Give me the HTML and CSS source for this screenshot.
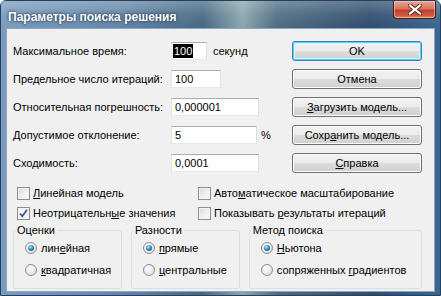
FILE: index.html
```html
<!DOCTYPE html>
<html lang="ru">
<head>
<meta charset="UTF-8" />
<title>Параметры поиска решения</title>
<link rel="stylesheet" href="styles.css">
</head>
<body>

<div class="window">
  <div class="titlebar">
    <span class="title">Параметры поиска решения</span>
    <div class="close">
      <svg width="14" height="11" viewBox="0 0 14 11">
        <path d="M2 1.5 L12 9.5 M12 1.5 L2 9.5" stroke="#5a2418" stroke-width="4" stroke-linecap="square"/>
        <path d="M2 1.5 L12 9.5 M12 1.5 L2 9.5" stroke="#fff" stroke-width="2.2" stroke-linecap="square"/>
      </svg>
    </div>
  </div>

  <div class="client">
    <div class="top">
      <div class="fields">
        <div class="label">Максимальное время:</div>
        <div class="cell"><div class="edit w-time"><span class="selected">100</span></div><span class="unit">секунд</span></div>

        <div class="label">Предельное число итераций:</div>
        <div class="cell"><div class="edit w-iter">100</div></div>

        <div class="label">Относительная погрешность:</div>
        <div class="cell"><div class="edit w-wide">0,000001</div></div>

        <div class="label">Допустимое отклонение:</div>
        <div class="cell"><div class="edit w-tol">5</div><span class="pct">%</span></div>

        <div class="label">Сходимость:</div>
        <div class="cell"><div class="edit w-wide">0,0001</div></div>
      </div>

      <div class="buttons">
        <div class="btn default"><span>OK</span></div>
        <div class="btn"><span>Отмена</span></div>
        <div class="btn"><span><u>З</u>агрузить модель...</span></div>
        <div class="btn"><span>Сохр<u>а</u>нить модель...</span></div>
        <div class="btn"><span><u>С</u>правка</span></div>
      </div>
    </div>

    <div class="checks">
      <div class="check"><span class="box"></span><span><u>Л</u>инейная модель</span></div>
      <div class="check"><span class="box"></span><span>Авто<u>м</u>атическое масштабирование</span></div>
      <div class="check"><span class="box checked">
        <svg width="11" height="11" viewBox="0 0 11 11"><path d="M2 5.5 L4.3 8.3 L9 1.8" fill="none" stroke="#3d5a96" stroke-width="1.8"/></svg>
      </span><span>Неотрицательн<u>ы</u>е значения</span></div>
      <div class="check"><span class="box"></span><span>Показывать <u>р</u>езультаты итераций</span></div>
    </div>

    <div class="groups">
      <fieldset class="group g-est">
        <legend>Оценки</legend>
        <div class="radio"><span class="dot on"></span><span>лин<u>е</u>йная</span></div>
        <div class="radio"><span class="dot"></span><span><u>к</u>вадратичная</span></div>
      </fieldset>
      <fieldset class="group g-diff">
        <legend>Разности</legend>
        <div class="radio"><span class="dot on"></span><span><u>п</u>рямые</span></div>
        <div class="radio"><span class="dot"></span><span><u>ц</u>ентральные</span></div>
      </fieldset>
      <fieldset class="group g-method">
        <legend>Метод поиска</legend>
        <div class="radio"><span class="dot on"></span><span><u>Н</u>ьютона</span></div>
        <div class="radio"><span class="dot"></span><span>сопряженных <u>г</u>радиентов</span></div>
      </fieldset>
    </div>
  </div>
</div>

</body>
</html>
```

FILE: styles.css
```css
* {
box-sizing: border-box;
}

body {
margin: 0;
background: #fff;
font-family: "Liberation Sans", Arial, sans-serif;
font-size: 11px;
color: #000;
overflow: hidden;
}

.window {
width: 441px;
height: 296px;
border: 1px solid #23405e;
border-radius: 6px 6px 0 0;
background: linear-gradient(90deg, #7a9dbf 0%, #6386a8 28%, #466882 46%, #8aa6ae 55%, #4d6c82 63%, #2e4d6d 84%, #3b6690 100%);
padding: 0 5px 3px 5px;
display: flex;
flex-direction: column;
}

.titlebar {
height: 27px;
display: flex;
align-items: flex-start;
justify-content: space-between;
background: linear-gradient(180deg, rgba(255,255,255,0.25) 0%, rgba(255,255,255,0.08) 50%, rgba(0,0,0,0) 100%);
margin: 0 -5px;
padding: 0 4px 0 7px;
}

.title {
margin-top: 9px;
font-family: "Liberation Sans", Arial, sans-serif;
font-weight: bold;
font-size: 12px;
color: #fff;
text-shadow: 0 0 2px #1c3550, 0 0 4px rgba(20,40,60,0.6);
}

.close {
width: 43px;
height: 18px;
border: 1px solid #4e1e16;
border-top: none;
border-radius: 0 0 4px 4px;
background: linear-gradient(180deg, #e7a596 0%, #d6765f 45%, #c2402a 55%, #cc5a40 85%, #e28a6c 100%);
box-shadow: inset 0 0 0 1px rgba(255,220,200,0.5);
display: flex;
align-items: center;
justify-content: center;
}

.client {
flex: 1;
background: #f0f0f0;
border: 1px solid #8ea6bf;
padding: 8px 12px 0 6px;
}

.top {
display: flex;
justify-content: space-between;
}

.fields {
display: grid;
grid-template-columns: 158px 121px;
grid-auto-rows: 28px;
}

.label {
display: flex;
align-items: center;
}

.cell {
display: flex;
align-items: center;
}

.edit {
height: 18px;
background: #fff;
border: 1px solid #abadb3;
border-color: #abadb3 #dbdfe6 #e3e9ef #e2e3ea;
padding-left: 3px;
display: flex;
align-items: center;
}

.w-time { width: 36px; padding-left: 1px; }
.w-iter { width: 50px; }
.w-wide { width: 88px; }
.w-tol { width: 86px; }

.selected {
background: #000;
color: #fff;
padding: 0 1px;
line-height: 14px;
}

.unit {
margin-left: 6px;
}

.pct {
margin-left: 4px;
}

.buttons {
display: flex;
flex-direction: column;
width: 130px;
}

.btn {
height: 20px;
margin: 4px 0;
border: 1px solid #707070;
border-radius: 3px;
background: linear-gradient(180deg, #f2f2f2 0%, #ebebeb 50%, #dddddd 51%, #cfcfcf 100%);
box-shadow: inset 0 0 0 1px #fcfcfc;
display: flex;
align-items: center;
justify-content: center;
}

.btn.default {
border-color: #3c7fb1;
box-shadow: inset 0 0 0 1px #48d6ff, inset 0 0 0 2px #e0f4fc;
}

.checks {
display: grid;
grid-template-columns: 181px auto;
grid-auto-rows: 20px;
margin-top: 6px;
padding-left: 4px;
}

.check {
display: flex;
align-items: center;
}

.box {
width: 13px;
height: 13px;
margin-right: 3px;
border: 1px solid #8f8f8f;
background: linear-gradient(135deg, #d8d8d8 0%, #f2f2f2 60%, #fbfbfb 100%);
box-shadow: inset 0 0 0 1px #f4f4f4;
display: flex;
align-items: center;
justify-content: center;
}

.box.checked {
background: #f4f4f4;
}

.groups {
display: flex;
gap: 9px;
margin-top: 1px;
}

.group {
margin: 0;
padding: 0 0 7px 0;
border: 1px solid #d5dfe5;
border-radius: 3px;
}

.group legend {
margin-left: 1px;
padding: 0 2px;
line-height: 13px;
}

.g-est { width: 110px; }
.g-diff { width: 110px; }
.g-method { width: 175px; }

.radio {
height: 22px;
padding-left: 11px;
display: flex;
align-items: center;
}

.dot {
width: 12px;
height: 12px;
margin-right: 4px;
border: 1px solid #8f8f8f;
border-radius: 50%;
background: radial-gradient(circle at 40% 35%, #fdfdfd 0%, #e6e6e6 60%, #cfcfcf 100%);
display: flex;
align-items: center;
justify-content: center;
}

.dot.on::after {
content: "";
width: 6px;
height: 6px;
border-radius: 50%;
background: radial-gradient(circle at 40% 35%, #b6e8fb 0%, #2a86c0 50%, #11466f 100%);
}
```
